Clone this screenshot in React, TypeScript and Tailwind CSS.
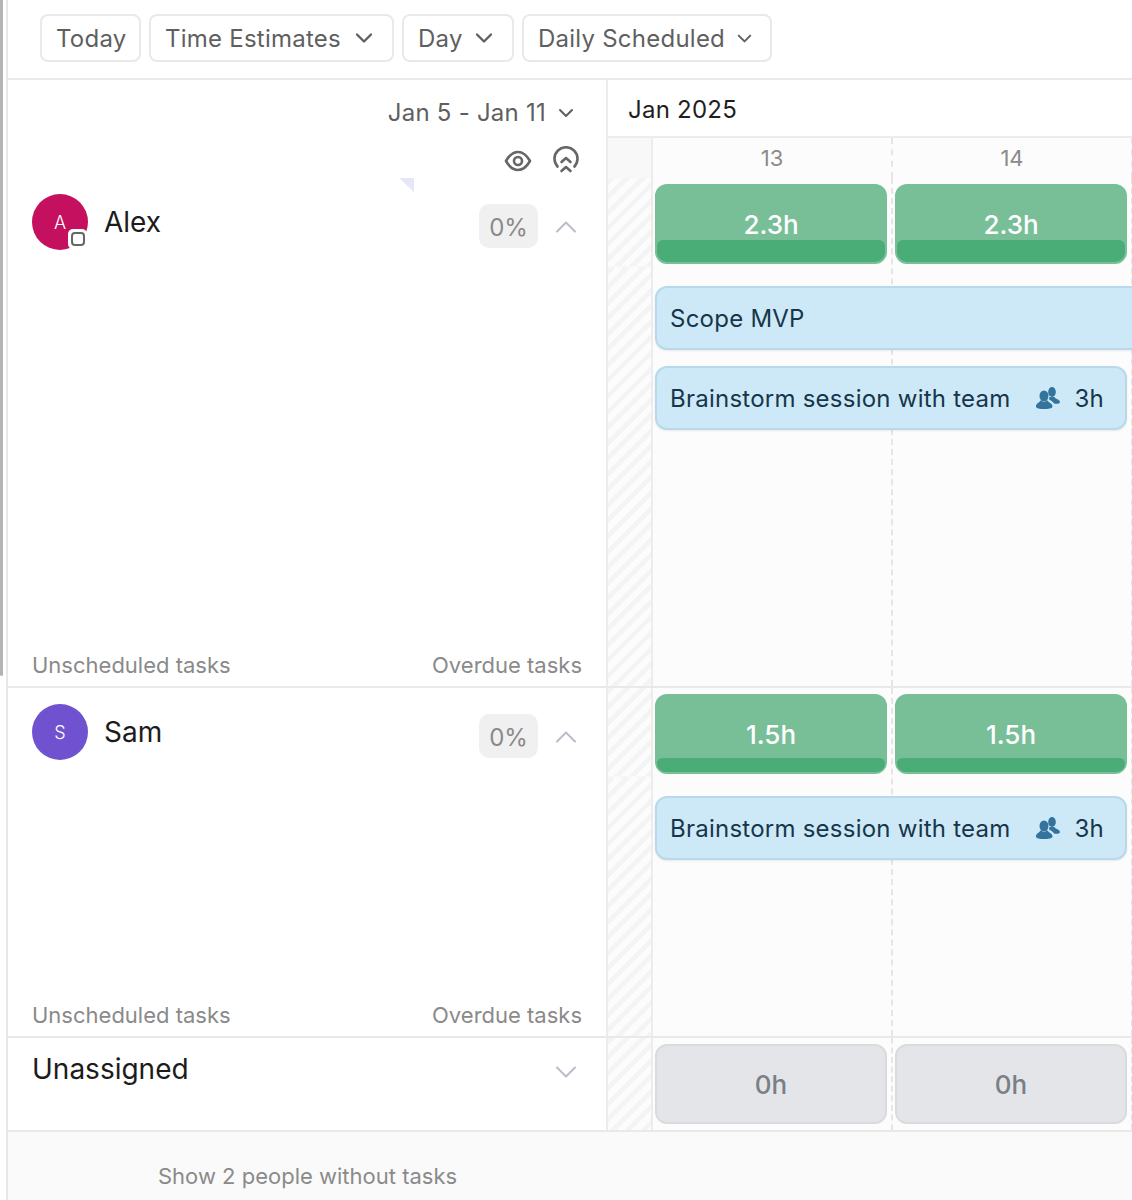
import React from 'react';
import { ChevronDown, ChevronUp } from 'lucide-react';

const stripes =
  'bg-[repeating-linear-gradient(135deg,#f4f4f4_0px,#f4f4f4_5px,#fcfcfc_5px,#fcfcfc_11px)]';

function ToolbarButton({ label, caret, className }: { label: string; caret?: number; className: string }) {
  return (
    <button className={`flex h-12 items-center justify-between rounded-lg border-2 border-[#e9e9e9] bg-white pl-[14px] pr-[14px] text-[24px] tracking-[0.01em] text-[#5f5f5f] ${className}`}>
      <span className="whitespace-nowrap pt-px">{label}</span>
      {caret && <ChevronDown size={caret} strokeWidth={2} className="text-[#5f5f5f]" />}
    </button>
  );
}

function EyeIcon() {
  return (
    <svg width="28" height="22" viewBox="0 0 28 22" fill="none" stroke="#666" strokeWidth="2.6">
      <path d="M2 11 C6 4 10 2 14 2 C18 2 22 4 26 11 C22 18 18 20 14 20 C10 20 6 18 2 11 Z" strokeLinejoin="round" />
      <circle cx="14" cy="11" r="4" />
    </svg>
  );
}

function FocusIcon() {
  return (
    <svg width="28" height="30" viewBox="0 0 28 30" fill="none" stroke="#666" strokeWidth="2.6" strokeLinecap="round" strokeLinejoin="round">
      <path d="M5.5 20.5 A11.5 11.5 0 1 1 22.5 20.5" />
      <path d="M9.5 16 L14 12 L18.5 16" />
      <path d="M9.5 25 L14 21 L18.5 25" />
    </svg>
  );
}

function PeopleIcon() {
  return (
    <svg width="24" height="22" viewBox="0 0 24 22" fill="#33739c">
      <ellipse cx="16" cy="5" rx="3.8" ry="5" />
      <path d="M13.5 10 L18.5 10 C19 12 24 12.5 24 15 C24 17 20 17 18 16.5 C17 14.5 15 13.5 13 12.5 Z" />
      <ellipse cx="8" cy="9" rx="4.5" ry="5.5" />
      <path d="M5 13 C6.5 15.5 9.5 15.5 11 13 C12 15.5 16.5 16 16.5 19.5 C16.5 21.5 12 22 8 22 C4 22 0 21.5 0 19.5 C0 16 4 15.5 5 13 Z" />
    </svg>
  );
}

function Avatar({ initial, color, badge }: { initial: string; color: string; badge?: boolean }) {
  return (
    <div className={`relative flex h-14 w-14 shrink-0 items-center justify-center rounded-full text-[18px] font-light text-white ${color}`}>
      {initial}
      {badge && (
        <span className="absolute left-9 top-[35px] flex h-[20px] w-[19px] items-center justify-center rounded-[5px] bg-white">
          <span className="h-[14px] w-[14px] rounded-[4px] border-[2.5px] border-[#666]" />
        </span>
      )}
    </div>
  );
}

function PersonHeader({ name, initial, color, badge }: { name: string; initial: string; color: string; badge?: boolean }) {
  return (
    <div className="flex items-start pl-6 pr-[22px] pt-4">
      <Avatar initial={initial} color={color} badge={badge} />
      <span className="ml-4 mt-[9px] text-[28px] leading-[38px] text-[#1c1c1c]">{name}</span>
      <span className="ml-auto mt-[10px] flex h-11 w-[59px] items-center justify-center rounded-[10px] bg-[#f0f0f0] pt-[3px] text-[24px] text-[#8a8a8a]">0%</span>
      <ChevronUp size={36} strokeWidth={1.3} className="ml-[10px] mt-[15px] text-[#b9bcc8]" />
    </div>
  );
}

function RowFooter() {
  return (
    <div className="mt-auto flex justify-between pb-[7px] pl-6 pr-[24px] text-[22px] leading-[28px] text-[#8a8a8a]">
      <span>Unscheduled tasks</span>
      <span>Overdue tasks</span>
    </div>
  );
}

function CapacityBar({ hours, band, gray }: { hours: string; band?: string; gray?: boolean }) {
  if (gray) {
    return (
      <div className="z-10 ml-0.5 mt-1.5 flex h-20 w-[232px] items-center justify-center rounded-xl border-2 border-[#dadbde] bg-[#e4e5e8] text-[26px] font-medium text-[#7b7f85]">
        {hours}
      </div>
    );
  }
  return (
    <div className="z-10 ml-0.5 mt-1.5 flex h-20 w-[232px] flex-col rounded-xl border-2 border-[#78bf97] bg-[#78bf97] text-center text-[26px] font-medium text-white">
      <span className="h-[54px] flex-none pt-5 leading-[38px]">{hours}</span>
      <span className={`mt-auto flex-none rounded-t-[6px] rounded-b-[10px] bg-[#4aad78] ${band}`} />
    </div>
  );
}

function TaskBar({ title, hours, className }: { title: string; hours?: string; className?: string }) {
  return (
    <div className={`z-10 col-start-1 col-end-3 ml-0.5 flex h-16 items-center rounded-xl border-2 border-[#b9d9ea] bg-[#cde9f8] pl-[13px] pr-[21px] text-[24px] tracking-[0.01em] text-[#17364a] shadow-[0_1px_2px_rgba(0,0,0,0.08)] ${className ?? ''}`}>
      <span className="pt-0.5">{title}</span>
      {hours && (
        <>
          <span className="ml-auto"><PeopleIcon /></span>
          <span className="ml-[15px] pt-0.5">{hours}</span>
        </>
      )}
    </div>
  );
}

function DayGrid({ rows, children }: { rows: string; children: React.ReactNode }) {
  return (
    <div className={`grid grid-cols-[240px_240px] bg-[#fcfcfc] ${rows}`}>
      <div className="col-start-1 row-start-1 row-end-5 border-r-2 border-dashed border-[#e6e6e6]" />
      <div className="col-start-2 row-start-1 row-end-5 border-r-2 border-dashed border-[#e6e6e6]" />
      {children}
    </div>
  );
}

function Gutter({ split }: { split?: boolean }) {
  return (
    <div className="flex w-[45px] shrink-0 flex-col border-r-2 border-[#ececec]">
      {split && <div className={`h-[90px] border-b-2 border-dashed border-[#f8f8f8] ${stripes}`} />}
      <div className={`flex-1 ${stripes}`} />
    </div>
  );
}

export default function App() {
  return (
    <div className="relative h-[1200px] w-[1132px] overflow-hidden bg-white font-['Inter',sans-serif]">
      <div className="ml-[6px] border-l-2 border-[#e8e8e8]">
        {/* toolbar */}
        <div className="flex h-[78px] items-start gap-2 pl-[32px] pt-3.5">
          <ToolbarButton label="Today" className="w-[101px]" />
          <ToolbarButton label="Time Estimates" caret={28} className="w-[245px]" />
          <ToolbarButton label="Day" caret={28} className="w-[112px]" />
          <ToolbarButton label="Daily Scheduled" caret={23} className="w-[250px]" />
        </div>

        {/* header row */}
        <div className="flex h-[100px] border-t-2 border-[#e9e9e9]">
          <div className="relative flex w-[598px] shrink-0 flex-col items-end pr-[26px]">
            <div className="flex h-[66px] items-center gap-2 pr-[2px] text-[24px] tracking-[0.01em] text-[#5f5f5f]">
              Jan 5 - Jan 11
              <ChevronDown size={24} strokeWidth={2} />
            </div>
            <div className="flex items-center gap-[20px]">
              <EyeIcon />
              <FocusIcon />
            </div>
            <svg width="15" height="14" className="absolute left-[391px] top-[98px]" viewBox="0 0 15 14">
              <polygon points="0,0 15,0 15,14" fill="#e5e5fb" />
            </svg>
          </div>
          <div className="flex-1 border-l-2 border-[#ececec]">
            <div className="flex h-[58px] items-center border-b-2 border-[#ececec] pl-5 pt-1 text-[24px] tracking-[0.01em] text-[#1f1f1f]">Jan 2025</div>
            <div className="flex h-[40px]">
              <div className="w-[45px] shrink-0 border-r-2 border-[#ececec] bg-[#f8f8f8]" />
              <div className="flex w-[240px] shrink-0 items-center justify-center border-r-2 border-dashed border-[#e6e6e6] bg-[#fcfcfc] text-[22px] text-[#8a8a8a]">13</div>
              <div className="flex w-[240px] shrink-0 items-center justify-center border-r-2 border-dashed border-[#e6e6e6] bg-[#fcfcfc] text-[22px] text-[#8a8a8a]">14</div>
            </div>
          </div>
        </div>

        {/* Alex */}
        <div className="flex h-[510px] border-b-2 border-[#e9e9e9]">
          <div className="flex w-[598px] shrink-0 flex-col">
            <PersonHeader name="Alex" initial="A" color="bg-[#c4105e]" badge />
            <RowFooter />
          </div>
          <div className="flex flex-1 border-l-2 border-[#ececec]">
            <Gutter split />
            <DayGrid rows="grid-rows-[90px_auto_auto_1fr]">
              <div className="col-start-1 row-start-1 flex"><CapacityBar hours="2.3h" band="h-[22px]" /></div>
              <div className="col-start-2 row-start-1 flex"><CapacityBar hours="2.3h" band="h-[22px]" /></div>
              <TaskBar title="Scope MVP" className="row-start-2 mt-[18px] mr-[-8px]" />
              <TaskBar title="Brainstorm session with team" hours="3h" className="row-start-3 mt-4 mr-[6px]" />
            </DayGrid>
          </div>
        </div>

        {/* Sam */}
        <div className="flex h-[350px] border-b-2 border-[#e9e9e9]">
          <div className="flex w-[598px] shrink-0 flex-col">
            <PersonHeader name="Sam" initial="S" color="bg-[#7052d0]" />
            <RowFooter />
          </div>
          <div className="flex flex-1 border-l-2 border-[#ececec]">
            <Gutter split />
            <DayGrid rows="grid-rows-[90px_auto_auto_1fr]">
              <div className="col-start-1 row-start-1 flex"><CapacityBar hours="1.5h" band="h-[14px]" /></div>
              <div className="col-start-2 row-start-1 flex"><CapacityBar hours="1.5h" band="h-[14px]" /></div>
              <TaskBar title="Brainstorm session with team" hours="3h" className="row-start-2 mt-[18px] mr-[6px]" />
            </DayGrid>
          </div>
        </div>

        {/* Unassigned */}
        <div className="flex h-[94px] border-b-2 border-[#e9e9e9]">
          <div className="flex w-[598px] shrink-0 items-start justify-between pl-6 pr-[22px] pt-3">
            <span className="text-[28px] leading-[38px] text-[#1c1c1c]">Unassigned</span>
            <ChevronDown size={36} strokeWidth={1.3} className="mt-1 text-[#b9bcc8]" />
          </div>
          <div className="flex flex-1 border-l-2 border-[#ececec]">
            <Gutter />
            <DayGrid rows="grid-rows-[1fr]">
              <div className="col-start-1 row-start-1 flex"><CapacityBar hours="0h" gray /></div>
              <div className="col-start-2 row-start-1 flex"><CapacityBar hours="0h" gray /></div>
            </DayGrid>
          </div>
        </div>

        {/* footer */}
        <div className="h-[68px] bg-[#fafafa] pl-[150px] pt-[30px] text-[22px] leading-[28px] text-[#8a8a8a]">
          Show 2 people without tasks
        </div>
      </div>
      <div className="absolute left-0 top-0 h-[676px] w-[3px] rounded-b-sm bg-[#b4b4b4]" />
    </div>
  );
}
